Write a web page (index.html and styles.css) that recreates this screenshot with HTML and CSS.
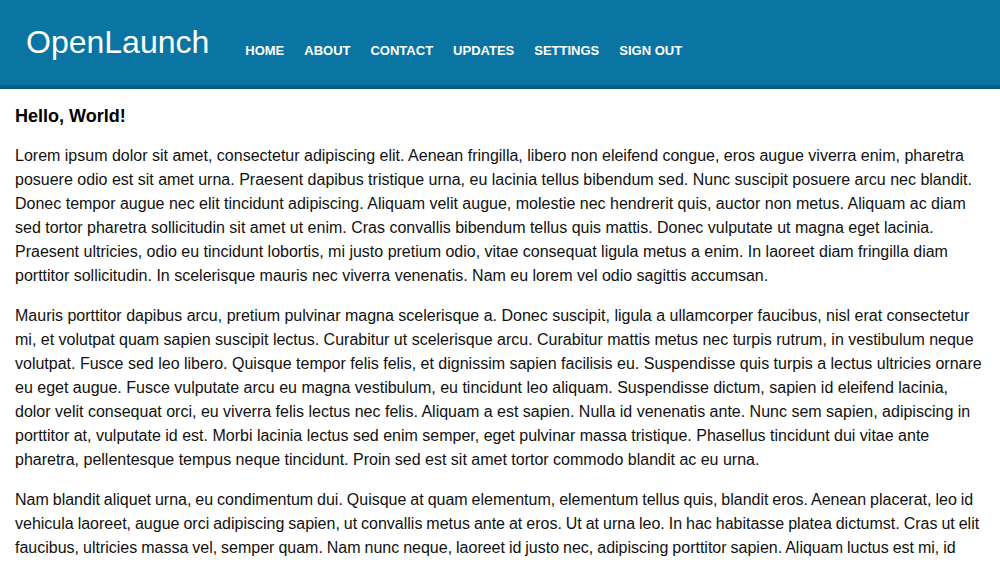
FILE: index.html
```html
<!DOCTYPE html>
<html lang="en">
<head>
<meta charset="utf-8">
<title>OpenLaunch</title>
<link rel="stylesheet" href="styles.css">
</head>
<body>
<header class="topbar">
  <div class="brand">OpenLaunch</div>
  <nav class="nav">
    <a href="#">HOME</a>
    <a href="#">ABOUT</a>
    <a href="#">CONTACT</a>
    <a href="#">UPDATES</a>
    <a href="#">SETTINGS</a>
    <a href="#">SIGN OUT</a>
  </nav>
</header>
<main class="content">
  <h1 class="title">Hello, World!</h1>
  <p>Lorem ipsum dolor sit amet, consectetur adipiscing elit. Aenean fringilla, libero non eleifend congue, eros augue viverra enim, pharetra posuere odio est sit amet urna. Praesent dapibus tristique urna, eu lacinia tellus bibendum sed. Nunc suscipit posuere arcu nec blandit. Donec tempor augue nec elit tincidunt adipiscing. Aliquam velit augue, molestie nec hendrerit quis, auctor non metus. Aliquam ac diam sed tortor pharetra sollicitudin sit amet ut enim. Cras convallis bibendum tellus quis mattis. Donec vulputate ut magna eget lacinia. Praesent ultricies, odio eu tincidunt lobortis, mi justo pretium odio, vitae consequat ligula metus a enim. In laoreet diam fringilla diam porttitor sollicitudin. In scelerisque mauris nec viverra venenatis. Nam eu lorem vel odio sagittis accumsan.</p>
  <p>Mauris porttitor dapibus arcu, pretium pulvinar magna scelerisque a. Donec suscipit, ligula a ullamcorper faucibus, nisl erat consectetur mi, et volutpat quam sapien suscipit lectus. Curabitur ut scelerisque arcu. Curabitur mattis metus nec turpis rutrum, in vestibulum neque volutpat. Fusce sed leo libero. Quisque tempor felis felis, et dignissim sapien facilisis eu. Suspendisse quis turpis a lectus ultricies ornare eu eget augue. Fusce vulputate arcu eu magna vestibulum, eu tincidunt leo aliquam. Suspendisse dictum, sapien id eleifend lacinia, dolor velit consequat orci, eu viverra felis lectus nec felis. Aliquam a est sapien. Nulla id venenatis ante. Nunc sem sapien, adipiscing in porttitor at, vulputate id est. Morbi lacinia lectus sed enim semper, eget pulvinar massa tristique. Phasellus tincidunt dui vitae ante pharetra, pellentesque tempus neque tincidunt. Proin sed est sit amet tortor commodo blandit ac eu urna.</p>
  <p class="snug">Nam blandit aliquet urna, eu condimentum dui. Quisque at quam elementum, elementum tellus quis, blandit eros. Aenean placerat, leo id vehicula laoreet, augue orci adipiscing sapien, ut convallis metus ante at eros. Ut at urna leo. In hac habitasse platea dictumst. Cras ut elit faucibus, ultricies massa vel, semper quam. Nam nunc neque, laoreet id justo nec, adipiscing porttitor sapien. Aliquam luctus est mi, id imperdiet nisi sagittis vel. Vivamus vel nulla sed lectus dictum ultricies. Sed non lorem et magna gravida pretium.</p>
</main>
</body>
</html>
```
FILE: styles.css
```css
html, body {
  margin: 0;
  padding: 0;
  background: #ffffff;
}

body {
  font-family: "Liberation Sans", Arial, Helvetica, sans-serif;
  color: #111111;
}

.topbar {
  display: flex;
  align-items: center;
  height: 85px;
  padding: 0 26px;
  background: #0a75a3;
  border-bottom: 4px solid #065f80;
}

.brand {
  font-size: 32px;
  color: #ffffff;
  line-height: 1;
  margin-right: 36px;
  margin-top: -2px;
}

.nav {
  display: flex;
  gap: 20px;
  margin-top: 16px;
}

.nav a {
  color: #ffffff;
  text-decoration: none;
  font-size: 13px;
  font-weight: bold;
  line-height: 1;
}

.content {
  padding: 16px 15px 0;
}

.title {
  margin: 0 0 17px;
  font-size: 18px;
  line-height: 22px;
  font-weight: bold;
  color: #000000;
}

.content p {
  margin: 0 0 16px;
  font-size: 16px;
  line-height: 24px;
}

.content p.snug {
  word-spacing: -0.5px;
}
```
